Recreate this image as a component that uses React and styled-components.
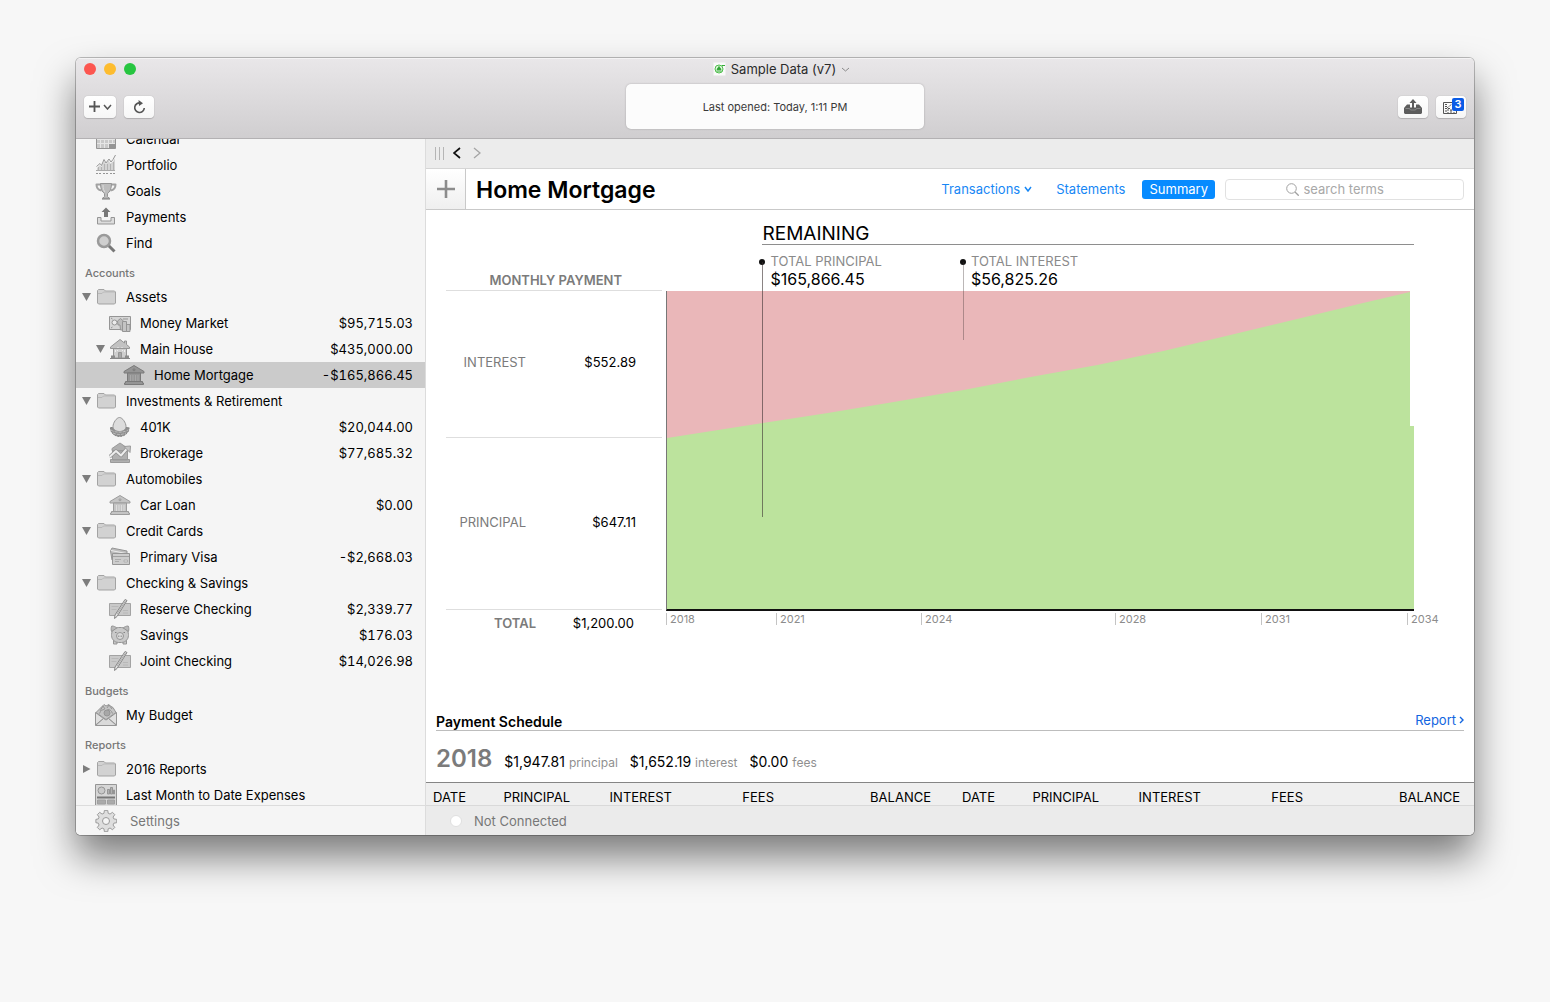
import React from 'react';
import styled, { createGlobalStyle } from 'styled-components';

const GlobalStyle = createGlobalStyle`
  *, *::before, *::after { box-sizing: border-box; }
  body { margin: 0; background: #f7f7f7; }
  button, input { font: inherit; color: inherit; margin: 0; padding: 0; border: 0; background: none; }
  a { color: inherit; text-decoration: none; }
  ul, dl, dd, h1, h2, p { margin: 0; padding: 0; list-style: none; }
  svg { display: block; flex: none; }
`;

const Page = styled.div`
  display: flex;
  height: 100vh;
  padding: 58px 76px 167px;
  font-family: Inter, "Liberation Sans", sans-serif;
  font-size: 13px;
  line-height: 16px;
  color: #000;
`;

const Window = styled.div`
  flex: 1;
  min-width: 0;
  display: flex;
  flex-direction: column;
  overflow: hidden;
  border-radius: 5px;
  background: #fff;
  box-shadow: 0 0 0 1px rgba(0, 0, 0, 0.24), 0 22px 38px rgba(0, 0, 0, 0.5);
`;

/* ---------- title bar ---------- */

const Toolbar = styled.header`
  display: grid;
  grid-template-columns: 1fr 298px 1fr;
  grid-template-rows: 22px 45px;
  row-gap: 4px;
  height: 81px;
  padding: 0 8px;
  background: linear-gradient(#e9e7e9, #d0ced0);
  border-bottom: 1px solid #b3b1b3;
  box-shadow: inset 0 1px 0 #f4f3f4;
`;

const Lights = styled.div`
  display: flex;
  align-items: center;
  gap: 8px;
`;

const Light = styled.button`
  width: 12px;
  height: 12px;
  border-radius: 50%;
  background: ${(p) => p.$color};
`;

const WindowTitle = styled.div`
  grid-column: 2;
  display: flex;
  align-items: center;
  justify-content: center;
  gap: 5px;
  padding-left: 13px;
  color: #2b2b2b;
`;

const ToolGroup = styled.div`
  grid-row: 2;
  grid-column: ${(p) => p.$column};
  justify-self: ${(p) => (p.$column === 3 ? 'end' : 'start')};
  display: flex;
  align-items: center;
  gap: 8px;
`;

const ToolButton = styled.button`
  position: relative;
  display: flex;
  align-items: center;
  justify-content: center;
  gap: 3px;
  width: ${(p) => (p.$wide ? 32 : 30)}px;
  height: 22px;
  border-radius: 4px;
  background: linear-gradient(#fff, #f6f6f6);
  box-shadow: 0 0 1px rgba(0, 0, 0, 0.3), 0 1px 1px rgba(0, 0, 0, 0.15);
  color: #555;
`;

const Badge = styled.span`
  position: absolute;
  top: 2px;
  right: 2px;
  width: 12px;
  height: 13px;
  border-radius: 2px;
  background: #0a5be6;
  color: #fff;
  font-size: 11px;
  font-weight: 600;
  line-height: 13px;
  text-align: center;
`;

const StatusPanel = styled.p`
  grid-row: 2;
  grid-column: 2;
  display: flex;
  align-items: center;
  justify-content: center;
  border-radius: 5px;
  background: #fcfcfc;
  box-shadow: 0 0 2px rgba(0, 0, 0, 0.25);
  color: #3a3a3a;
  font-size: 11px;
`;

const Body = styled.div`
  flex: 1;
  min-height: 0;
  display: grid;
  grid-template-columns: 350px minmax(0, 1fr);
  grid-template-rows: minmax(0, 1fr);
`;

/* ---------- sidebar ---------- */

const Sidebar = styled.nav`
  display: flex;
  flex-direction: column;
  min-height: 0;
  background: #f5f5f5;
  border-right: 1px solid #dcdcdc;
`;

const SourceList = styled.div`
  flex: 1;
  min-height: 0;
  display: flex;
  flex-direction: column;
  justify-content: flex-end;
  overflow: hidden;
  > * { flex: none; }
`;

const GroupTitle = styled.h2`
  height: 28px;
  padding: 9px 9px 0;
  color: #777;
  font-size: 11px;
  font-weight: 500;
  line-height: 16px;
`;

const Row = styled.li`
  display: flex;
  align-items: center;
  height: 26px;
  padding: 0 12px 0 ${(p) => 4 + p.$level * 14}px;
  background: ${(p) => (p.$selected ? '#cbcbcb' : 'transparent')};
`;

const Twisty = styled.button`
  width: 12px;
  height: 12px;
  margin-right: 3px;
  display: flex;
  align-items: center;
  justify-content: center;
`;

const TwistySpace = styled.span`
  width: 15px;
`;

const RowLink = styled.a`
  flex: 1;
  display: flex;
  align-items: center;
  gap: 9px;
`;

const Amount = styled.span`
  margin-left: auto;
  font-variant-numeric: tabular-nums;
`;

const SettingsLink = styled.a`
  z-index: 1;
  display: flex;
  align-items: center;
  gap: 13px;
  height: 30px;
  margin-top: -3px;
  padding-left: 19px;
  background: #f5f5f5;
  border-top: 1px solid #dcdcdc;
  color: #777;
`;

/* ---------- main pane ---------- */

const Main = styled.main`
  display: flex;
  flex-direction: column;
  min-height: 0;
`;

const HistoryBar = styled.div`
  display: flex;
  align-items: center;
  gap: 6px;
  height: 30px;
  padding: 0 0 1px 8px;
  background: #ececec;
  border-bottom: 1px solid #d5d5d5;
`;

const HistoryButton = styled.button`
  width: 14px;
  height: 16px;
  display: flex;
  align-items: center;
  justify-content: center;
`;

const AccountBar = styled.div`
  display: flex;
  align-items: center;
  height: 41px;
  padding-right: 10px;
  border-bottom: 1px solid #c9c9c9;
`;

const AddButton = styled.button`
  align-self: stretch;
  width: 40px;
  display: flex;
  align-items: center;
  justify-content: center;
  background: linear-gradient(#fff, #efefef);
  border-right: 1px solid #c9c9c9;
`;

const AccountName = styled.h1`
  flex: 1;
  padding: 2px 0 0 10px;
  font-size: 23px;
  font-weight: 600;
  line-height: 28px;
`;

const Tab = styled.button`
  display: flex;
  align-items: center;
  gap: 4px;
  height: 19px;
  margin-left: 10px;
  padding: 0 7px;
  border-radius: 3px;
  background: ${(p) => (p.$active ? '#078bff' : 'transparent')};
  color: ${(p) => (p.$active ? '#fff' : '#1787f5')};
`;

const SearchField = styled.label`
  display: flex;
  align-items: center;
  justify-content: center;
  gap: 5px;
  flex: 0 1 239px;
  height: 21px;
  margin-left: 10px;
  border: 1px solid #e1e1e1;
  border-radius: 4px;
  input {
    width: 100px;
    outline: none;
  }
  input::placeholder {
    color: #a8a8a8;
    opacity: 1;
  }
`;

const Overview = styled.section`
  flex: 1;
  min-height: 0;
  display: grid;
  grid-template-columns: 216px minmax(0, 1fr);
  column-gap: 4px;
  padding: 0 60px 0 20px;
`;

const PaymentSplit = styled.dl`
  display: flex;
  flex-direction: column;
`;

const SplitTitle = styled.div`
  height: 81px;
  padding: 62px 40px 0 0;
  border-bottom: 1px solid #dedede;
  color: #7b7b7b;
  font-weight: 600;
  text-align: right;
`;

const SplitRow = styled.div`
  flex: ${(p) => p.$share} 1 0;
  display: grid;
  grid-template-columns: 80px 1fr;
  align-items: center;
  padding: 0 26px 4px 0;
  border-bottom: 1px solid #dedede;
  text-align: right;
  dt { color: #7b7b7b; }
`;

const TotalRow = styled.div`
  display: grid;
  grid-template-columns: 90px 1fr;
  height: 36px;
  padding: 5px 28px 0 0;
  text-align: right;
  dt { color: #7b7b7b; font-weight: 600; }
`;

const Chart = styled.div`
  position: relative;
  display: flex;
  flex-direction: column;
`;

const ChartTitle = styled.h2`
  height: 35px;
  margin: 0 0 46px 12.9%;
  padding-top: 13px;
  border-bottom: 1px solid #8e8e8e;
  font-size: 19px;
  font-weight: 400;
  line-height: 22px;
`;

const Plot = styled.div`
  flex: 1;
  min-height: 0;
  border-left: 1px solid #777;
  border-bottom: 2px solid #111;
  svg { width: 100%; height: 100%; }
`;

const Axis = styled.div`
  display: grid;
  grid-template-columns: 110fr 145fr 194fr 146fr 146fr 7fr;
  height: 35px;
  padding-top: 2px;
`;

const Tick = styled.span`
  min-width: 0;
  height: 12px;
  padding-left: 3px;
  border-left: 1px solid #c4c4c4;
  color: #8c8c8c;
  font-size: 11px;
  line-height: 12px;
`;

const Callout = styled.div`
  position: absolute;
  top: 43px;
  left: ${(p) => p.$at}%;
  padding-left: 8px;
  color: #8a8a8a;
  white-space: nowrap;

  &::before {
    content: '';
    position: absolute;
    left: -3px;
    top: 6px;
    width: 6px;
    height: 6px;
    border-radius: 50%;
    background: #111;
  }

  &::after {
    content: '';
    position: absolute;
    left: 0;
    top: 9px;
    width: 1px;
    height: ${(p) => p.$drop}px;
    background: rgba(60, 50, 50, ${(p) => (p.$faint ? 0.35 : 0.6)});
  }

  strong {
    display: block;
    color: #000;
    font-size: 16px;
    font-weight: 400;
    line-height: 20px;
  }
`;

const Schedule = styled.section`
  padding: 67px 10px 0;
  height: 136px;
`;

const ScheduleHead = styled.div`
  display: flex;
  align-items: flex-start;
  justify-content: space-between;
  height: 18px;
  border-bottom: 1px solid #bdbdbd;
  h2 {
    font-size: 14px;
    font-weight: 600;
    line-height: 18px;
  }
`;

const ReportLink = styled.a`
  display: flex;
  align-items: center;
  gap: 3px;
  color: #1265e0;
  line-height: 14px;
`;

const YearLine = styled.div`
  display: flex;
  align-items: baseline;
  gap: 12px;
  padding-top: 14px;
`;

const Year = styled.strong`
  color: #7b7b7b;
  font-size: 24px;
  font-weight: 600;
  line-height: 28px;
`;

const YearFigure = styled.span`
  font-size: 14px;
  small {
    margin-left: 4px;
    color: #8f8f8f;
    font-size: 12px;
  }
`;

const ScheduleTableFrame = styled.div`
  height: 23px;
  padding: 0 14px 0 7px;
  background: #efefef;
  border-top: 1px solid #858585;
`;

const ScheduleTable = styled.table`
  width: 100%;
  table-layout: fixed;
  border-collapse: collapse;
`;

const HeadCell = styled.th`
  width: ${(p) => p.$width || 'auto'};
  padding: 6px 0 0 ${(p) => (p.$inset ? 31 : 0)}px;
  font-weight: 400;
  line-height: 16px;
  text-align: ${(p) => (p.$left ? 'left' : 'right')};
`;

const StatusBar = styled.footer`
  display: flex;
  align-items: center;
  gap: 12px;
  height: 30px;
  padding-left: 24px;
  background: #ebebeb;
  border-top: 1px solid #d9d9d9;
  color: #777;
`;

const StatusDot = styled.span`
  width: 12px;
  height: 12px;
  border-radius: 50%;
  background: #fff;
  border: 1px solid #e0e0e0;
`;

/* ---------- drawings ---------- */

const Glyph = ({ children, stroke = '#959595', fill = '#c9c9c9' }) => (
  <svg width="22" height="22" viewBox="0 0 22 22" fill={fill} stroke={stroke} strokeWidth="1" strokeLinejoin="round" aria-hidden="true">
    {children}
  </svg>
);

const CalendarIcon = () => (
  <Glyph>
    <path d="M1.5 2.5h19v18h-19z" />
    <path d="M2 7.500h18M2 11.500h18M2 15.500h18M5.500 7v13M9.500 7v13M13.500 7v13M17.500 7v13" stroke="#e6e6e6" />
    <path d="M14 16h6v4h-6z" fill="#959595" stroke="none" />
  </Glyph>
);

const PortfolioIcon = () => (
  <Glyph>
    <path d="M2 16v-2l3-3 1.500 2 2.500-6 2 3 2.500-3.500 2 3 2.500-2 2-3v11.500z" fill="#d3d3d3" stroke="none" />
    <path d="M1.500 12.500 5 9.500l1.500 2 2.500-6 2 3.500 3-4 2 3 2-2.500L20.500 1" fill="none" />
    <path d="M3.500 13v3M6.500 13v3M9.500 10v6M12.500 10v6M15.500 10v6M18.500 8v8" stroke="#b2b2b2" />
    <path d="M1 16.500h19" stroke="#aaa" />
    <path d="M1 19.500h5M8 19.500h5M15 19.500h5" strokeDasharray="2 1" />
  </Glyph>
);

const GoalsIcon = () => (
  <Glyph>
    <path d="M6 4.500H1.500c0 4 2 5.500 5 6M16 4.500h4.500c0 4-2 5.500-5 6" fill="none" stroke="#a2a2a2" strokeWidth="2" />
    <path d="M5.500 3.500h11c0 5-1.500 8.500-4 10v3l2.500 2.500h-8l2.500-2.500v-3c-2.500-1.500-4-5-4-10z" fill="#bdbdbd" />
    <path d="M8 5c0 4 1 6 2 7" fill="none" stroke="#dedede" />
    <path d="M7 18.500h8" strokeWidth="1.500" />
  </Glyph>
);

const PaymentsIcon = () => (
  <Glyph>
    <path d="M2.500 11.500h3.500v3.500h10v-3.500h3.500v6.500h-17z" fill="#dcdcdc" />
    <path d="M11 1.500 15.500 6h-2.500v5h-4v-5h-2.500z" fill="#787878" stroke="none" />
  </Glyph>
);

const FindIcon = () => (
  <Glyph>
    <path d="m13.500 13.500 6 6" stroke="#777" strokeWidth="3" />
    <circle cx="9" cy="9" r="6" fill="#cfcfcf" stroke="#9a9a9a" strokeWidth="2.500" />
  </Glyph>
);

const FolderIcon = () => (
  <Glyph stroke="#a3a3a3" fill="#d2d2d2">
    <path d="M2.500 17V4.500l1-1h5.500l1.500 1.500h9l1 1V17l-1 1h-16z" />
    <path d="M3 7.500h4l1.500-1.500h11.500" fill="none" stroke="#b9b9b9" />
  </Glyph>
);

const MoneyIcon = () => (
  <Glyph>
    <path d="M.5 4.500h21v13H.5z" fill="#d6d6d6" />
    <circle cx="5.500" cy="10.500" r="2.500" fill="#ececec" />
    <path d="M2 6l1.500 1M2 16l1.500-1" />
    <path d="M8.500 9l3-2.500 3 2.500v9h-3l-.5-5H9z" fill="#bcbcbc" />
    <path d="M13.500 9.500h4v10h-4zM17.500 12.500h3.500v7h-3.500z" fill="#c4c4c4" />
    <path d="M14 7h5" />
  </Glyph>
);

const HouseIcon = () => (
  <Glyph>
    <path d="M4.500 9.500h13V20h-13z" fill="#cfcfcf" />
    <path d="M11 1.500 1.500 9v1.500h19V9l-3-2.500V3h-2v2z" fill="#c2c2c2" />
    <path d="M9.500 14.500h3V20h-3z" fill="#a8a8a8" />
    <path d="M6.500 12v2M15.500 12v2M8.500 9.500h1M12.500 9.500h1M8.500 12v1M13.500 12v1" stroke="#eee" />
    <path d="M2 17.500h4v3H2zM16 17.500h4v3h-4z" fill="#8c8c8c" stroke="none" />
    <path d="M1 20.500h20" stroke="#878787" />
  </Glyph>
);

const BankIcon = ({ dark }) => (
  <Glyph stroke={dark ? '#7a7a7a' : '#9c9c9c'} fill={dark ? '#959595' : '#c4c4c4'}>
    <path d="M11 1.500 1 7.500v1.500h20V7.500z" />
    <path d="M4.500 9h13v9h-13z" />
    <path d="M7.500 11v6M10 11v6M12.500 11v6M15 11v6" stroke={dark ? '#adadad' : '#e2e2e2'} strokeWidth=".8" />
    <path d="M2.500 17.500h17v1.500h1v1.500h-19v-1.500h1z" />
    <circle cx="11" cy="5.800" r="1" />
  </Glyph>
);

const NestEggIcon = () => (
  <Glyph>
    <path d="M1.500 11.500c-.5 5 4 9 9 9s10-4 9.500-9z" fill="#8e8e8e" stroke="#858585" strokeDasharray="2 1" />
    <path d="M10.500 1.500c3 0 6.500 5.500 6.500 9 0 3-3 5-6.500 5S4 13.500 4 10.500c0-3.500 3.500-9 6.500-9z" fill="#dcdcdc" />
    <path d="M2 14c4 3 13 3 17 0M4 17c4 2 9 2 13 0" fill="none" stroke="#bcbcbc" strokeDasharray="3 1" />
  </Glyph>
);

const BrokerageIcon = () => (
  <Glyph fill="#b0b0b0" stroke="#9a9a9a">
    <path d="M11 1 3 6.500v2h16v-2zM3.500 9h15v9h-15zM1.500 17.500h19v3h-19z" />
    <path d="M.5 15 7 9l5 4.500L18.500 6" fill="none" stroke="#8f8f8f" strokeWidth="3.500" />
    <path d="M.5 15 7 9l5 4.500L18.500 6" fill="none" stroke="#ededed" strokeWidth="2" />
    <path d="m15 4.500 6.500-.5-.5 6.500z" fill="#c4c4c4" />
  </Glyph>
);

const CardsIcon = () => (
  <Glyph>
    <path d="m1.500 5 1.500-3 15 3v9H3z" fill="#bdbdbd" />
    <path d="m2 4.500 15 3" stroke="#ececec" />
    <path d="M3.500 7.500h17v11h-17z" fill="#cdcdcd" />
    <path d="M4 10.500h16" stroke="#a0a0a0" />
    <path d="M6 13.500h6M6 15.500h4" stroke="#acacac" />
    <path d="M15 14h3.500v2H15z" fill="#dedede" stroke="#b0b0b0" />
  </Glyph>
);

const CheckIcon = () => (
  <Glyph>
    <path d="M.5 5.500h21v12H.5z" fill="#c9c9c9" stroke="#a3a3a3" />
    <path d="M2.500 8.500h7M2.500 11.500h5M14 12.500h5M14 15h5" stroke="#b8b8b8" />
    <path d="M5.500 20.500 6 17 16 1.500l2 1L8 18.500z" fill="#e2e2e2" stroke="#888" />
    <path d="M8 16 16.500 3" stroke="#aaa" />
  </Glyph>
);

const PiggyIcon = () => (
  <Glyph>
    <path d="M4.500 16v4h3.500v-2M14 18v2h3.500v-4" />
    <rect x="2.500" y="3.500" width="17" height="15" rx="7" />
    <path d="M2.500 7.500c-.5-2-.5-4 .3-5.500 2 0 3.700.8 5 2zM19.500 7.500c.5-2 .5-4-.3-5.500-2 0-3.700.8-5 2z" fill="#b9b9b9" />
    <circle cx="11" cy="12" r="3.500" fill="#dadada" />
    <path d="M9.800 11.500v1.500M12.200 11.500v1.500M6 8.500h1.500M14.500 8.500h1.500" stroke="#858585" />
  </Glyph>
);

const BudgetIcon = () => (
  <Glyph>
    <path d="M1 8.500 7 2.500l2-2 2 1.500 3-1.500 2 2 2 1 3 5-10 7z" fill="#c4c4c4" />
    <path d="M5 7l3-5 2 3M12 4l2-3 3 4M4.500 9.500c1-3 3-4 5-4M17.500 9.500c-1-3-3-4-5-4" fill="none" />
    <circle cx="12" cy="9" r="3" fill="#a7a7a7" />
    <path d="M.5 8.500 8.500 14.500.5 21zM21.500 8.500l-8 6 8 6.500z" fill="#e0e0e0" />
    <path d="M.5 21.500 8.500 14.500l2.500 1.500 2.500-1.500 8 7z" fill="#dadada" />
  </Glyph>
);

const ReportIcon = () => (
  <Glyph>
    <path d="M.5 .5h21v21H.5z" fill="#d6d6d6" />
    <circle cx="6.500" cy="6.500" r="3.500" />
    <path d="M12.500 5.500h2V10h-2zM15.500 3.500h2V10h-2zM18.500 6h1V10h-1z" fill="#b0b0b0" />
    <path d="M2 13.500h18" stroke="#777" strokeWidth="2" />
    <path d="M2.500 16h8v4h-8zM12.500 16h7v4h-7z" fill="#aaa" stroke="#a0a0a0" />
  </Glyph>
);

const GearIcon = () => (
  <Glyph stroke="#999" fill="#dedede">
    <path d="M9.300 .8h3.400l.5 3 1.900.8 2.500-1.800 2.400 2.400-1.800 2.500.8 1.900 3 .5v3.400l-3 .5-.8 1.900 1.800 2.500-2.400 2.400-2.500-1.800-1.900.8-.5 3H9.300l-.5-3-1.900-.8-2.500 1.800L2 18.400l1.800-2.500-.8-1.900-2.500-.5v-3.400l2.500-.5.8-1.900L2 5.200l2.400-2.400 2.500 1.800 1.900-.8z" transform="translate(.4 -.4) scale(.97)" />
    <circle cx="11" cy="11" r="3.500" fill="#f5f5f5" />
  </Glyph>
);

const Triangle = ({ open }) => (
  <svg width="9" height="9" viewBox="0 0 9 9" fill="#7d7d7d" aria-hidden="true">
    <path d={open ? 'M0 0h9L4.500 8z' : 'M1 0v8l7.500-4z'} />
  </svg>
);

const Chevron = ({ dir, width, height, color, weight }) => (
  <svg width={width} height={height} viewBox={`0 0 ${width} ${height}`} fill="none" stroke={color} strokeWidth={weight} aria-hidden="true">
    {dir === 'down' && <path d={`M1 1 ${width / 2} ${height - 1} ${width - 1} 1`} />}
    {dir === 'left' && <path d={`M${width - 1} 1 1 ${height / 2} ${width - 1} ${height - 1}`} />}
    {dir === 'right' && <path d={`M1 1 ${width - 1} ${height / 2} 1 ${height - 1}`} />}
  </svg>
);

const Plus = ({ size, color, weight }) => (
  <svg width={size} height={size} viewBox="0 0 18 18" stroke={color} strokeWidth={weight} aria-hidden="true">
    <path d="M9 0v18M0 9h18" />
  </svg>
);

const RefreshGlyph = () => (
  <svg width="13" height="14" viewBox="0 0 13 14" fill="none" stroke="#555" strokeWidth="1.600" aria-hidden="true">
    <path d="M7.500 3A4.800 4.800 0 1 0 11.300 8" />
    <path d="M5.500 0 10 3.300 6 6z" fill="#555" stroke="none" />
  </svg>
);

const TrayGlyph = () => (
  <svg width="18" height="15" viewBox="0 0 18 15" aria-hidden="true">
    <path d="M0 9 3 5.500h3v3h6v-3h3L18 9v5l-1 1H1l-1-1z" fill="#5c5c5c" />
    <path d="M1.500 9.500h4l1 1.500h5l1-1.500h4" fill="none" stroke="#999" strokeWidth=".7" />
    <path d="M9 0 12.500 4H10v5H8V4H5.500z" fill="#5c5c5c" />
  </svg>
);

const LedgerGlyph = () => (
  <svg width="16" height="14" viewBox="0 0 16 14" fill="none" stroke="#555" aria-hidden="true">
    <path d="M.5 2.500h13v11H.5z" />
    <path d="M2 4.500h3M2 6.500h2M2 8.500h5M2 11h3M7 11h2M11 9v4M8 9v4M5 9v4M4 8l5-4" strokeDasharray="2 1" />
    <path d="M9.500 0h7v11h-7z" fill="#fff" stroke="none" />
  </svg>
);

const DocumentGlyph = () => (
  <svg width="13" height="14" viewBox="0 0 13 14" aria-hidden="true">
    <path d="M.5 .5h12v13H.5z" fill="#fafafa" />
    <circle cx="6" cy="7" r="4" fill="#dff5dc" stroke="#4dbf4a" />
    <path d="M3.500 9h5M6 4.500 4 7.500h4zM9 3.500h3" fill="#2f9e35" stroke="#35a93a" />
  </svg>
);

const SearchGlyph = () => (
  <svg width="13" height="13" viewBox="0 0 13 13" fill="none" stroke="#a0a0a0" aria-hidden="true">
    <circle cx="5.500" cy="5.500" r="4.800" />
    <path d="m9 9 3.700 3.700" strokeWidth="1.300" />
  </svg>
);

const Grip = () => (
  <svg width="10" height="13" viewBox="0 0 10 13" stroke="#b5b5b5" aria-hidden="true">
    <path d="M1.500 0v13M5.500 0v13M9.500 0v13" />
  </svg>
);

/* ---------- data ---------- */

const groups = [
  {
    rows: [
      { name: 'Calendar', icon: <CalendarIcon /> },
      { name: 'Portfolio', icon: <PortfolioIcon /> },
      { name: 'Goals', icon: <GoalsIcon /> },
      { name: 'Payments', icon: <PaymentsIcon /> },
      { name: 'Find', icon: <FindIcon /> },
    ],
  },
  {
    title: 'Accounts',
    rows: [
      { name: 'Assets', icon: <FolderIcon />, twisty: 'open' },
      { name: 'Money Market', icon: <MoneyIcon />, level: 1, amount: '$95,715.03' },
      { name: 'Main House', icon: <HouseIcon />, level: 1, amount: '$435,000.00', twisty: 'open' },
      { name: 'Home Mortgage', icon: <BankIcon dark />, level: 2, amount: '-$165,866.45', selected: true },
      { name: 'Investments & Retirement', icon: <FolderIcon />, twisty: 'open' },
      { name: '401K', icon: <NestEggIcon />, level: 1, amount: '$20,044.00' },
      { name: 'Brokerage', icon: <BrokerageIcon />, level: 1, amount: '$77,685.32' },
      { name: 'Automobiles', icon: <FolderIcon />, twisty: 'open' },
      { name: 'Car Loan', icon: <BankIcon />, level: 1, amount: '$0.00' },
      { name: 'Credit Cards', icon: <FolderIcon />, twisty: 'open' },
      { name: 'Primary Visa', icon: <CardsIcon />, level: 1, amount: '-$2,668.03' },
      { name: 'Checking & Savings', icon: <FolderIcon />, twisty: 'open' },
      { name: 'Reserve Checking', icon: <CheckIcon />, level: 1, amount: '$2,339.77' },
      { name: 'Savings', icon: <PiggyIcon />, level: 1, amount: '$176.03' },
      { name: 'Joint Checking', icon: <CheckIcon />, level: 1, amount: '$14,026.98' },
    ],
  },
  { title: 'Budgets', rows: [{ name: 'My Budget', icon: <BudgetIcon /> }] },
  {
    title: 'Reports',
    rows: [
      { name: '2016 Reports', icon: <FolderIcon />, twisty: 'closed' },
      { name: 'Last Month to Date Expenses', icon: <ReportIcon /> },
    ],
  },
];

const split = [
  { label: 'INTEREST', value: 552.89 },
  { label: 'PRINCIPAL', value: 647.11 },
];

const years = ['2018', '2021', '2024', '2028', '2031', '2034'];

const scheduleColumns = [
  { label: 'DATE', left: true, width: '59px' },
  { label: 'PRINCIPAL', width: '78px' },
  { label: 'INTEREST', width: '102px' },
  { label: 'FEES', width: '102px' },
  { label: 'BALANCE' },
  { label: 'DATE', left: true, inset: true, width: '91px' },
  { label: 'PRINCIPAL', width: '77px' },
  { label: 'INTEREST', width: '102px' },
  { label: 'FEES', width: '102px' },
  { label: 'BALANCE' },
];

const figures = [
  ['$1,947.81', 'principal'],
  ['$1,652.19', 'interest'],
  ['$0.00', 'fees'],
];

/* ---------- parts ---------- */

const SourceRow = ({ name, icon, level = 0, amount, twisty, selected }) => (
  <Row $level={level} $selected={selected}>
    {twisty ? (
      <Twisty type="button" aria-label={`Toggle ${name}`} aria-expanded={twisty === 'open'}>
        <Triangle open={twisty === 'open'} />
      </Twisty>
    ) : (
      <TwistySpace />
    )}
    <RowLink href="#" aria-current={selected ? 'page' : undefined}>
      {icon}
      {name}
      {amount && <Amount>{amount}</Amount>}
    </RowLink>
  </Row>
);

const LoanChart = () => (
  <Chart>
    <ChartTitle>REMAINING</ChartTitle>
    <Plot>
      <svg viewBox="0 0 748 318" preserveAspectRatio="none" role="img" aria-label="Interest and principal share of each payment">
        <path d="M0 0H744V318H0z" fill="#eab7b9" />
        <path d="M0 147 96 132 161 122 227 111 297 99 364 86 431 74 497 60 564 44 631 28 697 12 744 1V135H748V318H0z" fill="#bce39d" />
      </svg>
    </Plot>
    <Axis>
      {years.map((year) => (
        <Tick key={year}>{year}</Tick>
      ))}
    </Axis>
    <Callout $at={12.9} $drop={255}>
      TOTAL PRINCIPAL
      <strong>$165,866.45</strong>
    </Callout>
    <Callout $at={39.7} $drop={78} $faint>
      TOTAL INTEREST
      <strong>$56,825.26</strong>
    </Callout>
  </Chart>
);

export default function App() {
  return (
    <Page>
      <GlobalStyle />
      <Window>
        <Toolbar>
          <Lights>
            <Light type="button" aria-label="Close" $color="#fc5650" />
            <Light type="button" aria-label="Minimize" $color="#fdbc2f" />
            <Light type="button" aria-label="Zoom" $color="#27c540" />
          </Lights>
          <WindowTitle>
            <DocumentGlyph />
            Sample Data (v7)
            <Chevron dir="down" width={9} height={5} color="#8a8a8a" weight={1} />
          </WindowTitle>
          <ToolGroup $column={1}>
            <ToolButton type="button" aria-label="Add" $wide>
              <Plus size={11} color="#555" weight={3} />
              <Chevron dir="down" width={9} height={6} color="#555" weight={1.5} />
            </ToolButton>
            <ToolButton type="button" aria-label="Refresh">
              <RefreshGlyph />
            </ToolButton>
          </ToolGroup>
          <StatusPanel>Last opened: Today, 1:11 PM</StatusPanel>
          <ToolGroup $column={3}>
            <ToolButton type="button" aria-label="Send">
              <TrayGlyph />
            </ToolButton>
            <ToolButton type="button" aria-label="Reminders">
              <LedgerGlyph />
              <Badge>3</Badge>
            </ToolButton>
          </ToolGroup>
        </Toolbar>
        <Body>
          <Sidebar>
            <SourceList>
              {groups.map((group, i) => (
                <React.Fragment key={i}>
                  {group.title && <GroupTitle>{group.title}</GroupTitle>}
                  <ul>
                    {group.rows.map((row) => (
                      <SourceRow key={row.name} {...row} />
                    ))}
                  </ul>
                </React.Fragment>
              ))}
            </SourceList>
            <SettingsLink href="#">
              <GearIcon />
              Settings
            </SettingsLink>
          </Sidebar>
          <Main>
            <HistoryBar>
              <Grip />
              <HistoryButton type="button" aria-label="Back">
                <Chevron dir="left" width={8} height={12} color="#111" weight={1.7} />
              </HistoryButton>
              <HistoryButton type="button" aria-label="Forward">
                <Chevron dir="right" width={8} height={12} color="#a5a5a5" weight={1.3} />
              </HistoryButton>
            </HistoryBar>
            <AccountBar>
              <AddButton type="button" aria-label="New transaction">
                <Plus size={18} color="#8c8c8c" weight={2.6} />
              </AddButton>
              <AccountName>Home Mortgage</AccountName>
              <Tab type="button">
                Transactions
                <Chevron dir="down" width={8} height={6} color="#1787f5" weight={1.5} />
              </Tab>
              <Tab type="button">Statements</Tab>
              <Tab type="button" $active>Summary</Tab>
              <SearchField>
                <SearchGlyph />
                <input type="text" placeholder="search terms" aria-label="Search terms" />
              </SearchField>
            </AccountBar>
            <Overview>
              <PaymentSplit>
                <SplitTitle>MONTHLY PAYMENT</SplitTitle>
                {split.map((part) => (
                  <SplitRow key={part.label} $share={part.value}>
                    <dt>{part.label}</dt>
                    <dd>${part.value}</dd>
                  </SplitRow>
                ))}
                <TotalRow>
                  <dt>TOTAL</dt>
                  <dd>$1,200.00</dd>
                </TotalRow>
              </PaymentSplit>
              <LoanChart />
            </Overview>
            <Schedule>
              <ScheduleHead>
                <h2>Payment Schedule</h2>
                <ReportLink href="#">
                  Report
                  <Chevron dir="right" width={5} height={8} color="#1265e0" weight={1.4} />
                </ReportLink>
              </ScheduleHead>
              <YearLine>
                <Year>2018</Year>
                {figures.map(([value, label]) => (
                  <YearFigure key={label}>
                    {value}
                    <small>{label}</small>
                  </YearFigure>
                ))}
              </YearLine>
            </Schedule>
            <ScheduleTableFrame>
              <ScheduleTable>
                <thead>
                  <tr>
                    {scheduleColumns.map((col, i) => (
                      <HeadCell key={i} scope="col" $left={col.left} $inset={col.inset} $width={col.width}>
                        {col.label}
                      </HeadCell>
                    ))}
                  </tr>
                </thead>
              </ScheduleTable>
            </ScheduleTableFrame>
            <StatusBar>
              <StatusDot />
              Not Connected
            </StatusBar>
          </Main>
        </Body>
      </Window>
    </Page>
  );
}
